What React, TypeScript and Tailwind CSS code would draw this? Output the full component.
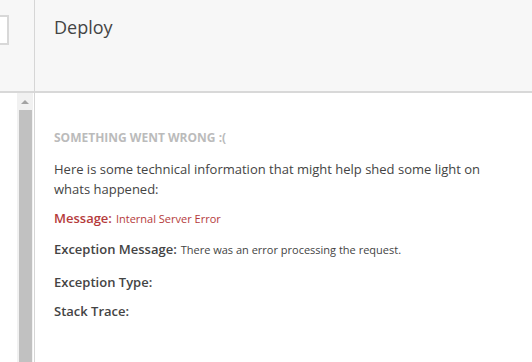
import React from 'react'

const font = { fontFamily: '"Open Sans", "Liberation Sans", sans-serif' }

function Scrollbar() {
  return (
    <div className="ml-[17px] w-[16px] bg-[#f1f1f1] flex flex-col items-center">
      <div className="h-[17px] flex items-center justify-center">
        <div className="w-0 h-0 border-l-[4px] border-r-[4px] border-b-[4px] border-l-transparent border-r-transparent border-b-[#a3a3a3]" />
      </div>
      <div className="ml-[1px] w-[13px] flex-1 bg-[#c1c1c1]" />
    </div>
  )
}

export default function App() {
  return (
    <div
      className="w-[532px] h-[362px] overflow-hidden flex bg-white text-[#444]"
      style={font}
    >
      {/* Left rail */}
      <div className="w-[35px] shrink-0 flex flex-col border-r border-[#d6d6d6]">
        <div className="h-[93px] shrink-0 bg-[#f7f7f7] border-b-2 border-[#d8d8d8] pt-[15px]">
          <div className="ml-[-20px] w-[29px] h-[30px] bg-white border-2 border-[#d8d8d8]" />
        </div>
        <div className="flex-1 flex">
          <Scrollbar />
        </div>
      </div>

      {/* Main */}
      <div className="flex-1 flex flex-col">
        <div className="h-[93px] shrink-0 bg-[#f7f7f7] border-b-2 border-[#d8d8d8] pl-[19px] pt-[15px]">
          <h1 className="text-[18px] leading-[25px] text-[#444]">Deploy</h1>
        </div>
        <div className="pl-[19px] pr-[40px] pt-[36px]">
          <h2 className="h-[18px] text-[12px] font-bold text-[#bbb] leading-[18px]">
            SOMETHING WENT WRONG :(
          </h2>
          <p className="mt-[12px] text-[13px] leading-[20px] text-[#444]">
            Here is some technical information that might help shed some light on whats happened:
          </p>
          <div className="mt-[9px] h-[20px] flex items-baseline gap-[4px] leading-[20px] text-[#b53b3b]">
            <span className="text-[13px] font-semibold">Message:</span>
            <span className="text-[11px]">Internal Server Error</span>
          </div>
          <div className="mt-[11px] h-[20px] flex items-baseline gap-[4px] leading-[20px]">
            <span className="text-[13px] font-semibold">Exception Message:</span>
            <span className="text-[11px]">There was an error processing the request.</span>
          </div>
          <div className="mt-[12px] h-[20px] leading-[20px]">
            <span className="text-[13px] font-semibold">Exception Type:</span>
          </div>
          <div className="mt-[9px] h-[20px] leading-[20px]">
            <span className="text-[13px] font-semibold">Stack Trace:</span>
          </div>
        </div>
      </div>
    </div>
  )
}
